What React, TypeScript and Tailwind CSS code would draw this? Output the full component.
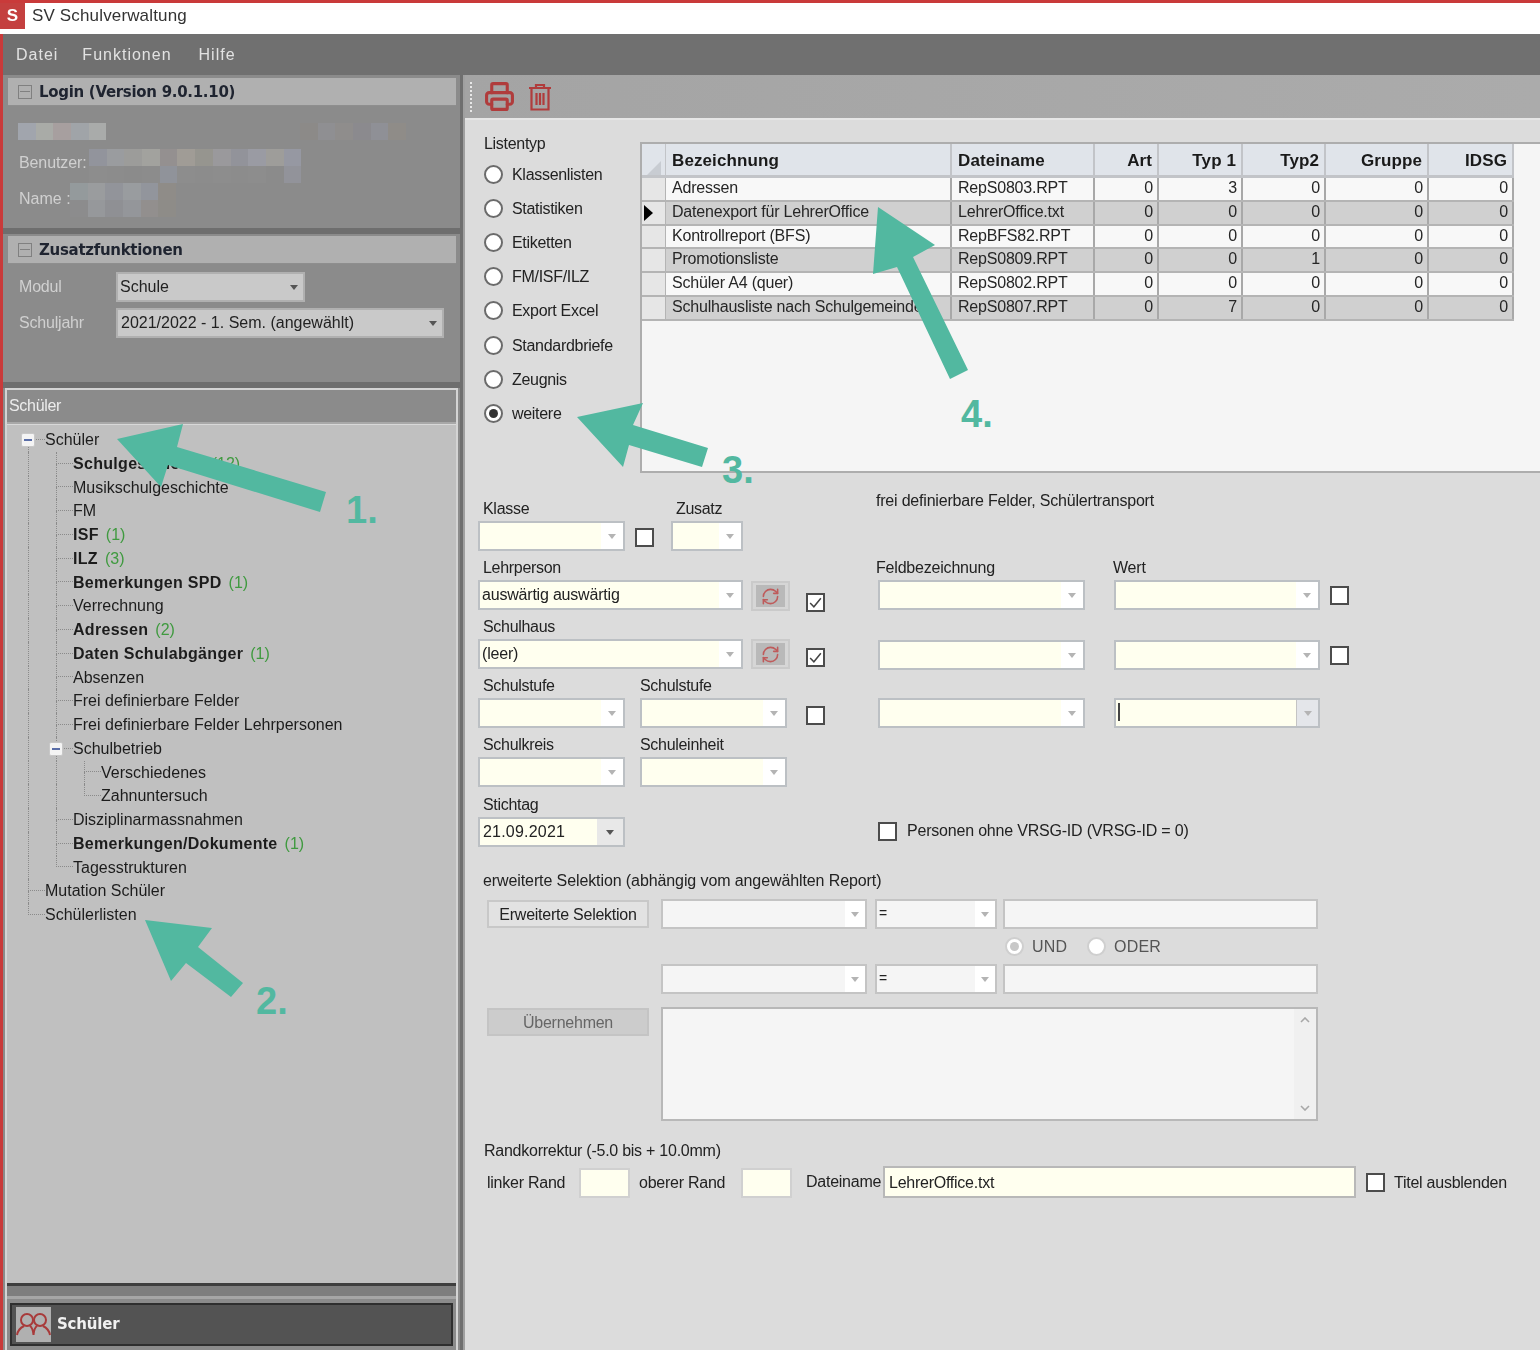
import { Printer, RefreshCw } from "lucide-react"
import type { ReactNode } from "react"

type TreeNode = {
  label: string
  level: number
  bold?: boolean
  count?: string
  box?: boolean
  root?: boolean
  last?: boolean
}

const treeNodes: TreeNode[] = [
  { label: "Schüler", level: 0, box: true, root: true },
  { label: "Schulgeschichte", level: 1, bold: true, count: "(12)" },
  { label: "Musikschulgeschichte", level: 1 },
  { label: "FM", level: 1 },
  { label: "ISF", level: 1, bold: true, count: "(1)" },
  { label: "ILZ", level: 1, bold: true, count: "(3)" },
  { label: "Bemerkungen SPD", level: 1, bold: true, count: "(1)" },
  { label: "Verrechnung", level: 1 },
  { label: "Adressen", level: 1, bold: true, count: "(2)" },
  { label: "Daten Schulabgänger", level: 1, bold: true, count: "(1)" },
  { label: "Absenzen", level: 1 },
  { label: "Frei definierbare Felder", level: 1 },
  { label: "Frei definierbare Felder Lehrpersonen", level: 1 },
  { label: "Schulbetrieb", level: 1, box: true },
  { label: "Verschiedenes", level: 2 },
  { label: "Zahnuntersuch", level: 2, last: true },
  { label: "Disziplinarmassnahmen", level: 1 },
  { label: "Bemerkungen/Dokumente", level: 1, bold: true, count: "(1)" },
  { label: "Tagesstrukturen", level: 1, last: true },
  { label: "Mutation Schüler", level: 0 },
  { label: "Schülerlisten", level: 0, last: true },
]

const listTypes = ["Klassenlisten", "Statistiken", "Etiketten", "FM/ISF/ILZ", "Export Excel", "Standardbriefe", "Zeugnis", "weitere"]

const reports = [
  ["Adressen", "RepS0803.RPT", "0", "3", "0", "0", "0"],
  ["Datenexport für LehrerOffice", "LehrerOffice.txt", "0", "0", "0", "0", "0"],
  ["Kontrollreport (BFS)", "RepBFS82.RPT", "0", "0", "0", "0", "0"],
  ["Promotionsliste", "RepS0809.RPT", "0", "0", "1", "0", "0"],
  ["Schüler A4 (quer)", "RepS0802.RPT", "0", "0", "0", "0", "0"],
  ["Schulhausliste nach Schulgemeinde", "RepS0807.RPT", "0", "7", "0", "0", "0"],
]

const pixelsTop = ["bg-[#a1a5ad]", "bg-[#a9aba7]", "bg-[#a79f9f]", "bg-[#a0a4a8]", "bg-[#a9abaa]"]
const pixelsTopRight = ["bg-[#8c8a88]", "bg-[#8f8f92]", "bg-[#8f8d8c]", "bg-[#8b8a8e]", "bg-[#8f9096]", "bg-[#8f8c88]"]
const pixelsUser = ["bg-[#92949c]", "bg-[#9a9c9f]", "bg-[#9c9c9a]", "bg-[#a2a29e]", "bg-[#949090]", "bg-[#a09c96]", "bg-[#96958f]", "bg-[#9a999c]", "bg-[#92939a]", "bg-[#9a9ba3]", "bg-[#9e9d9a]", "bg-[#9698a2]"]
const pixelsUserLow = ["bg-[#8d8d8d]", "bg-[#8c8c8c]", "bg-[#8b8b8b]", "bg-[#8c8c8c]", "bg-[#90939a]", "bg-[#8d8d8d]", "bg-[#8c8c8c]", "bg-[#8d8d8d]", "bg-[#8c8c8c]", "bg-[#8d8d8d]", "bg-[#8b8b8b]", "bg-[#92939a]"]
const pixelsName = ["bg-[#949a9c]", "bg-[#9a9c9e]", "bg-[#92949a]", "bg-[#999c9f]", "bg-[#92959c]", "bg-[#8f8c88]"]
const pixelsNameLow = ["bg-[#8c8c8d]", "bg-[#96989b]", "bg-[#8f9094]", "bg-[#94969a]", "bg-[#928f8e]", "bg-[#8e8c88]"]

function Pixels({ colors }: { colors: string[] }) {
  return (
    <div className="flex h-[17px]">
      {colors.map((c, i) => (
        <div key={i} className={`w-[17.7px] h-full ${c}`} />
      ))}
    </div>
  )
}

function Arrow({ light = false }: { light?: boolean }) {
  return <div className={`w-0 h-0 border-x-[4px] border-x-transparent border-t-[5px] ${light ? "border-t-[#b4b4b4]" : "border-t-[#555555]"}`} />
}

function Combo({ className, value }: { className: string; value?: string }) {
  return (
    <div className={`flex h-[30px] border-2 border-[#bcc0c4] bg-white ${className}`}>
      <div className="flex-1 bg-[#ffffef] pl-[2px] leading-[25px] text-[#222222] tracking-[-0.2px]">{value}</div>
      <div className="w-[22px] flex items-center justify-center">
        <Arrow light />
      </div>
    </div>
  )
}

function GreyCombo({ className, value }: { className: string; value?: string }) {
  return (
    <div className={`flex h-[30px] border-2 border-[#c4c4c4] bg-white ${className}`}>
      <div className="flex-1 bg-[#f5f5f5] pl-[2px] leading-[25px] text-[#222222] text-[14px]">{value}</div>
      <div className="w-[20px] flex items-center justify-center">
        <Arrow light />
      </div>
    </div>
  )
}

function Check({ checked, className = "" }: { checked?: boolean; className?: string }) {
  return (
    <div className={`w-[19px] h-[19px] border-2 border-[#4c4c4c] bg-white flex items-center justify-center ${className}`}>
      {checked && (
        <svg viewBox="0 0 14 14" className="w-[15px] h-[15px]">
          <path d="M2 7.5 L5.5 11 L12 3" fill="none" stroke="#444444" strokeWidth="1.4" />
        </svg>
      )}
    </div>
  )
}

function Radio({ selected, faded }: { selected?: boolean; faded?: boolean }) {
  return (
    <div className={`w-[19px] h-[19px] rounded-full border-2 flex items-center justify-center ${faded ? "border-[#cfcfcf] bg-white" : "border-[#6b6b6b] bg-white"} ${selected ? "bg-[#e8e8e8]" : ""}`}>
      {selected && <div className={`w-[9px] h-[9px] rounded-full ${faded ? "bg-[#c8c8c8]" : "bg-[#333333]"}`} />}
    </div>
  )
}

function Field({ label, className, flush, children }: { label: string; className: string; flush?: boolean; children: ReactNode }) {
  return (
    <div className={className}>
      <div className={`h-[20px] leading-[22px] mb-[3px] tracking-[-0.3px] whitespace-nowrap ${flush ? "" : "pl-[5px]"}`}>{label}</div>
      {children}
    </div>
  )
}

function SyncButton() {
  return (
    <div className="w-[39px] h-[30px] border-2 border-[#cacaca] bg-[#d6d6d6] flex items-center justify-center ml-[8px]">
      <div className="w-[29px] h-[22px] bg-[#b9b9b9] flex items-center justify-center">
        <RefreshCw size={19} color="#bf5b5b" strokeWidth={2} />
      </div>
    </div>
  )
}

function SectionHeader({ title }: { title: string }) {
  return (
    <div className="h-[28px] ml-[5px] mr-[4px] bg-[#b0b0b0] border-b border-[#8e8e8e] flex items-center pl-[10px] gap-[7px]">
      <div className="w-[14px] h-[14px] border border-[#808080] flex items-center justify-center">
        <div className="w-[10px] h-px bg-[#808080]" />
      </div>
      <div className="pt-[2px] font-['DejaVu_Sans',sans-serif] font-bold text-[15px] text-[#1f2430] tracking-[-0.3px]">{title}</div>
    </div>
  )
}

function TreeRow({ node }: { node: TreeNode }) {
  const line = "border-dotted border-[#8a8a8a]"
  return (
    <div className="flex h-[23.75px]">
      {node.level > 0 && <div className={`w-[28px] border-l ${line}`} />}
      {node.level > 1 && <div className={`w-[28px] border-l ${line}`} />}
      <div className="relative w-[17px] flex flex-col">
        <div className={`h-1/2 border-b ${line} ${node.root ? "" : "border-l"}`} />
        <div className={`h-1/2 ${line} ${node.last ? "" : "border-l"}`} />
        {node.box && (
          <div className="absolute left-[-7px] top-[5px] w-[14px] h-[14px] rounded-[2px] bg-[#f4f4f4] border border-[#c8c8c8] flex items-center justify-center">
            <div className="w-[8px] h-[2px] bg-[#5a6ea8]" />
          </div>
        )}
      </div>
      <div className={`leading-[23px] whitespace-nowrap text-[#1c1c1c] ${node.bold ? "font-bold tracking-[0.3px]" : "tracking-normal"}`}>
        {node.label}
        {node.count && <span className="ml-[7px] font-normal tracking-normal text-[#3f9a3f]">{node.count}</span>}
      </div>
    </div>
  )
}

function LeftPanel() {
  return (
    <div className="w-[457px] bg-[#8b8b8b] flex flex-col shrink-0">
      <div className="h-[153px] pt-[3px]">
        <SectionHeader title="Login (Version 9.0.1.10)" />
        <div className="flex justify-between pl-[15px] pr-[54px] mt-[17px]">
          <Pixels colors={pixelsTop} />
          <Pixels colors={pixelsTopRight} />
        </div>
        <div className="flex pl-[16px] mt-[9px] text-[#d0d0d0]">
          <div className="w-[70px] h-[34px] leading-[27px] tracking-[-0.1px]">Benutzer:</div>
          <div>
            <Pixels colors={pixelsUser} />
            <Pixels colors={pixelsUserLow} />
          </div>
        </div>
        <div className="flex pl-[16px] text-[#d0d0d0]">
          <div className="w-[51px] leading-[31px] whitespace-nowrap">Name :</div>
          <div>
            <Pixels colors={pixelsName} />
            <Pixels colors={pixelsNameLow} />
          </div>
        </div>
      </div>
      <div className="h-[6px] bg-[#6e6e6e]" />
      <div className="h-[148px] pt-[2px]">
        <SectionHeader title="Zusatzfunktionen" />
        <div className="flex items-center pl-[16px] mt-[8px]">
          <div className="w-[97px] text-[#d0d0d0] tracking-[-0.2px]">Modul</div>
          <div className="w-[189px] h-[30px] border-2 border-[#b0b0b0] bg-[#c9c9c9] flex items-center justify-between pl-[2px] pr-[5px] text-[#222222]">
            Schule
            <Arrow />
          </div>
        </div>
        <div className="flex items-center pl-[16px] mt-[6px]">
          <div className="w-[97px] text-[#d0d0d0] tracking-[-0.2px]">Schuljahr</div>
          <div className="w-[328px] h-[30px] border-2 border-[#b0b0b0] bg-[#c9c9c9] flex items-center justify-between pl-[3px] pr-[5px] text-[#222222]">
            2021/2022 - 1. Sem. (angewählt)
            <Arrow />
          </div>
        </div>
      </div>
      <div className="h-[6px] bg-[#6e6e6e]" />
      <div className="flex-1 flex flex-col mx-[2px] border-x-2 border-t-2 border-[#d4d4d4]">
        <div className="h-[34px] bg-[#8b8b8b] pl-[2px] leading-[32px] text-[#ececec] tracking-[-0.3px] border-b-2 border-[#a8a8a8]">Schüler</div>
        <div className="h-[859px] bg-[#c0c0c0] pl-[21px] pt-[3px] border-t border-[#d8d8d8]">
          {treeNodes.map((n) => (
            <TreeRow key={n.label + n.level} node={n} />
          ))}
        </div>
        <div className="h-[3px] bg-[#3e3e3e]" />
        <div className="h-[10px] bg-[#7e7e7e]" />
        <div className="h-[3px] bg-[#a6a6a6]" />
        <div className="flex-1 bg-[#8b8b8b] px-[3px] pt-[4px]">
          <div className="h-[43px] border-2 border-[#2e2e2e] bg-[#535353] flex items-center pl-[4px] gap-[6px]">
            <div className="w-[35px] h-[35px] bg-[#b0b0b0] flex items-center justify-center">
              <svg viewBox="0 0 35 35" className="w-[35px] h-[35px]" fill="none" stroke="#a83a3a" strokeWidth="2">
                <circle cx="11" cy="13" r="6" />
                <circle cx="24" cy="13" r="6" />
                <path d="M1 28 C2 22 6 20 8 19 M14 19 C17 21 17 24 17.5 28 C18 24 18 21 21 19 M27 19 C29 20 33 22 34 28" />
              </svg>
            </div>
            <div className="font-['DejaVu_Sans',sans-serif] font-bold text-[15px] text-[#f0f0f0] tracking-[-0.2px]">Schüler</div>
          </div>
        </div>
      </div>
    </div>
  )
}

function ReportGrid() {
  const cols = "grid grid-cols-[24px_286px_143px_64px_84px_83px_103px_85px]"
  const heads = ["Bezeichnung", "Dateiname", "Art", "Typ 1", "Typ2", "Gruppe", "IDSG"]
  return (
    <div className="flex-1 mt-[22px] h-[331px] bg-[#f5f5f5] border-l-2 border-t-2 border-b-2 border-[#adadad]">
      <div className="w-[872px]">
        <div className={`${cols} h-[34px] bg-[#e0e4ea] border-b-[3px] border-[#c2c4c8] font-bold text-[17px] text-[#1a1a1a] tracking-[0.1px]`}>
          <div className="border-r border-[#c2c4c8] flex items-end justify-end pr-[4px] pb-[2px]">
            <svg viewBox="0 0 14 14" className="w-[14px] h-[14px]">
              <polygon points="14,0 14,14 0,14" fill="#c8ccd2" />
            </svg>
          </div>
          {heads.map((h, i) => (
            <div key={h} className={`border-r-2 border-[#c2c4c8] leading-[33px] px-[5px] whitespace-nowrap ${i > 1 ? "text-right" : "pl-[6px]"}`}>
              {h}
            </div>
          ))}
        </div>
        {reports.map((r, idx) => (
          <div key={r[0]} className={`${cols} h-[23.8px] border-b-2 border-[#b4b4b4] ${idx % 2 ? "bg-[#d0d0d0]" : "bg-[#f8f8f8]"} text-[#262626]`}>
            <div className="bg-[#e6e6e6] border-r border-[#b4b4b4] flex items-center pl-[2px]">
              {idx === 1 && <div className="w-0 h-0 border-y-[8px] border-y-transparent border-l-[9px] border-l-black" />}
            </div>
            {r.map((c, i) => (
              <div key={i} className={`border-r-2 border-[#a8a8a8] leading-[20px] pl-[6px] pr-[4px] overflow-hidden whitespace-nowrap tracking-[-0.2px] ${i > 1 ? "text-right" : ""}`}>
                {c}
              </div>
            ))}
          </div>
        ))}
      </div>
    </div>
  )
}

function FormLeft() {
  return (
    <div className="w-[411px] pl-[13px] pt-[25px] flex flex-col gap-[6px] shrink-0">
      <div className="flex h-[53px]">
        <Field label="Klasse" className="w-[147px]">
          <Combo className="w-full" />
        </Field>
        <Check className="mt-[30px] ml-[10px]" />
        <Field label="Zusatz" className="w-[72px] ml-[17px]">
          <Combo className="w-full" />
        </Field>
      </div>
      <div className="flex h-[53px]">
        <Field label="Lehrperson" className="w-[265px]">
          <Combo className="w-full" value="auswärtig auswärtig" />
        </Field>
        <div className="mt-[24px]">
          <SyncButton />
        </div>
        <Check checked className="mt-[36px] ml-[16px]" />
      </div>
      <div className="flex h-[53px]">
        <Field label="Schulhaus" className="w-[265px]">
          <Combo className="w-full" value="(leer)" />
        </Field>
        <div className="mt-[23px]">
          <SyncButton />
        </div>
        <Check checked className="mt-[32px] ml-[16px]" />
      </div>
      <div className="flex h-[53px]">
        <Field label="Schulstufe" className="w-[147px]">
          <Combo className="w-full" />
        </Field>
        <Field label="Schulstufe" flush className="w-[147px] ml-[15px]">
          <Combo className="w-full" />
        </Field>
        <Check className="mt-[31px] ml-[19px]" />
      </div>
      <div className="flex h-[53px]">
        <Field label="Schulkreis" className="w-[147px]">
          <Combo className="w-full" />
        </Field>
        <Field label="Schuleinheit" flush className="w-[147px] ml-[15px]">
          <Combo className="w-full" />
        </Field>
      </div>
      <Field label="Stichtag" className="w-[147px] mt-[1px]">
        <div className="flex h-[30px] border-2 border-[#bcc0c4] bg-[#e8e8e8]">
          <div className="flex-1 bg-[#ffffef] pl-[3px] leading-[25px] tracking-[0.2px]">21.09.2021</div>
          <div className="w-[26px] flex items-center justify-center">
            <Arrow />
          </div>
        </div>
      </Field>
    </div>
  )
}

function FormRight() {
  return (
    <div className="flex-1 pt-[18px] tracking-[-0.2px]">
      <div className="h-[20px] leading-[20px]">frei definierbare Felder, Schülertransport</div>
      <div className="flex mt-[46px] h-[20px] leading-[22px]">
        <div className="w-[237px]">Feldbezeichnung</div>
        <div>Wert</div>
      </div>
      <div className="flex items-center pl-[2px] mt-[3px]">
        <Combo className="w-[207px]" />
        <Combo className="w-[206px] ml-[29px]" />
        <Check className="ml-[10px]" />
      </div>
      <div className="flex items-center pl-[2px] mt-[30px]">
        <Combo className="w-[207px]" />
        <Combo className="w-[206px] ml-[29px]" />
        <Check className="ml-[10px]" />
      </div>
      <div className="flex items-center pl-[2px] mt-[28px]">
        <Combo className="w-[207px]" />
        <div className="flex h-[30px] w-[206px] ml-[29px] border-2 border-[#bcc0c4] bg-[#e4e6ea]">
          <div className="flex-1 bg-[#ffffef] border-r border-[#c4c4c4] pl-[2px] py-[3px]">
            <div className="w-[2px] h-[18px] bg-[#444444]" />
          </div>
          <div className="w-[21px] flex items-center justify-center">
            <Arrow light />
          </div>
        </div>
      </div>
      <div className="flex items-center pl-[2px] mt-[91px] gap-[10px]">
        <Check />
        <div>Personen ohne VRSG-ID (VRSG-ID = 0)</div>
      </div>
    </div>
  )
}

function Selection() {
  return (
    <div className="pl-[18px] pt-[23px] tracking-[-0.25px]">
      <div className="h-[20px] leading-[22px] tracking-[-0.1px]">erweiterte Selektion (abhängig vom angewählten Report)</div>
      <div className="flex pl-[4px] mt-[9px]">
        <div className="w-[162px] h-[28px] mt-[1px] border-2 border-[#c8c8c8] bg-[#e2e2e2] text-center leading-[26px]">Erweiterte Selektion</div>
        <GreyCombo className="w-[206px] ml-[12px]" />
        <GreyCombo className="w-[122px] ml-[8px]" value="=" />
        <div className="w-[315px] h-[30px] ml-[6px] border-2 border-[#c4c4c4] bg-[#f5f5f5]" />
      </div>
      <div className="flex items-center h-[35px] pl-[522px] text-[#555555] tracking-[0.2px]">
        <Radio selected faded />
        <div className="ml-[8px] w-[55px]">UND</div>
        <Radio faded />
        <div className="ml-[8px]">ODER</div>
      </div>
      <div className="flex pl-[178px]">
        <GreyCombo className="w-[206px]" />
        <GreyCombo className="w-[122px] ml-[8px]" value="=" />
        <div className="w-[315px] h-[30px] ml-[6px] border-2 border-[#c4c4c4] bg-[#f5f5f5]" />
      </div>
      <div className="flex pl-[4px] mt-[13px]">
        <div className="w-[162px] h-[28px] mt-[1px] bg-[#cccccc] border-2 border-[#c4c4c4] text-center leading-[26px] text-[#666666]">Übernehmen</div>
        <div className="w-[657px] h-[114px] ml-[12px] border-2 border-[#b8b8b8] bg-[#f5f5f5] flex justify-end">
          <div className="w-[22px] bg-[#f0f0f0] flex flex-col items-center justify-between py-[8px]">
            <svg viewBox="0 0 10 6" className="w-[10px] h-[6px]" fill="none" stroke="#a8a8a8" strokeWidth="1.6">
              <path d="M1 5 L5 1 L9 5" />
            </svg>
            <svg viewBox="0 0 10 6" className="w-[10px] h-[6px]" fill="none" stroke="#a8a8a8" strokeWidth="1.6">
              <path d="M1 1 L5 5 L9 1" />
            </svg>
          </div>
        </div>
      </div>
      <div className="h-[20px] leading-[22px] mt-[19px] pl-[1px]">Randkorrektur (-5.0 bis + 10.0mm)</div>
      <div className="flex items-center mt-[6px] pl-[4px]">
        <div className="w-[92px] mt-[2px]">linker Rand</div>
        <div className="w-[51px] h-[30px] mt-[2px] border-2 border-[#d0d0d0] bg-[#ffffef]" />
        <div className="w-[111px] pl-[9px] mt-[2px]">oberer Rand</div>
        <div className="w-[51px] h-[30px] mt-[2px] border-2 border-[#d0d0d0] bg-[#ffffef]" />
        <div className="w-[91px] pl-[14px]">Dateiname</div>
        <div className="w-[473px] h-[32px] border-2 border-[#b8b8b8] bg-[#ffffef] pl-[4px] leading-[29px]">LehrerOffice.txt</div>
        <Check className="ml-[10px]" />
        <div className="ml-[9px] mt-[2px]">Titel ausblenden</div>
      </div>
    </div>
  )
}

function Annotations() {
  return (
    <>
      <svg viewBox="0 0 1540 1350" className="absolute inset-0 w-[1540px] h-[1350px] pointer-events-none" fill="#52b8a0">
        <polygon points="117,439 183,424 177,447 326,492 320,512 168,465 161,487" />
        <polygon points="145,920 212,928 198,947 243,983 231,997 186,963 171,981" />
        <polygon points="577,417 643,403 633,425 708,448 702,467 629,445 623,467" />
        <polygon points="878,207 935,245 913,257 968,370 950,379 897,267 873,274" />
      </svg>
      <div className="absolute left-[346px] top-[488px] text-[38px] leading-[44px] font-bold text-[#52b8a0]">1.</div>
      <div className="absolute left-[256px] top-[979px] text-[38px] leading-[44px] font-bold text-[#52b8a0]">2.</div>
      <div className="absolute left-[722px] top-[448px] text-[38px] leading-[44px] font-bold text-[#52b8a0]">3.</div>
      <div className="absolute left-[961px] top-[392px] text-[38px] leading-[44px] font-bold text-[#52b8a0]">4.</div>
    </>
  )
}

export default function App() {
  return (
    <div className="relative w-[1540px] h-[1350px] overflow-hidden font-['Liberation_Sans',sans-serif] text-[16px] text-[#222222]">
      <div className="w-full h-full flex flex-col bg-[#dcdcdc] blur-[0.4px]">
        <div className="h-[34px] shrink-0 border-t-[3px] border-[#c93a3a] bg-white flex items-center">
          <div className="w-[25px] h-[26px] -mt-[5px] bg-[#c4403f] text-white font-bold text-[17px] text-center leading-[25px]">S</div>
          <div className="ml-[7px] -mt-[5px] text-[17px] text-[#333333] tracking-[0.15px]">SV Schulverwaltung</div>
        </div>
        <div className="h-[41px] shrink-0 border-l-[3px] border-[#c93a3a] bg-[#707070] flex items-center pl-[13px] gap-[24px] text-[#e2e2e2] tracking-[1px]">
          <div>Datei</div>
          <div>Funktionen</div>
          <div className="ml-[3px]">Hilfe</div>
        </div>
        <div className="flex-1 flex min-h-0 border-l-[3px] border-[#c93a3a]">
          <LeftPanel />
          <div className="w-[5px] shrink-0 bg-[#6f6f6f] border-r-2 border-[#a0a0a0]" />
          <div className="flex-1 flex flex-col min-w-0">
            <div className="h-[45px] shrink-0 bg-gradient-to-r from-[#a4a4a4] to-[#ababab] border-b-2 border-[#e6e6e6] flex items-center">
              <div className="w-[3px] h-[30px] ml-[5px] border-l-2 border-dotted border-[#e8e8e8]" />
              <Printer size={31} color="#b03c3c" strokeWidth={2.4} className="ml-[11px]" />
              <svg viewBox="0 0 24 28" className="w-[24px] h-[28px] ml-[13px]" fill="none" stroke="#b03c3c" strokeWidth="2.2">
                <path d="M1 5 H23 M8 5 V2 H16 V5 M3.5 5 V26.5 H20.5 V5 M8.5 10 V22 M12 10 V22 M15.5 10 V22" />
              </svg>
            </div>
            <div className="flex shrink-0">
              <div className="w-[175px] pl-[19px] pt-[13px] shrink-0">
                <div className="h-[20px] leading-[22px] tracking-[-0.3px] mb-[4px]">Listentyp</div>
                {listTypes.map((t, i) => (
                  <div key={t} className="h-[34.2px] flex items-center gap-[9px] tracking-[-0.3px]">
                    <Radio selected={i === 7} />
                    <span className="mt-[1px]">{t}</span>
                  </div>
                ))}
              </div>
              <ReportGrid />
            </div>
            <div className="flex shrink-0">
              <FormLeft />
              <FormRight />
            </div>
            <Selection />
          </div>
        </div>
      </div>
      <Annotations />
    </div>
  )
}
